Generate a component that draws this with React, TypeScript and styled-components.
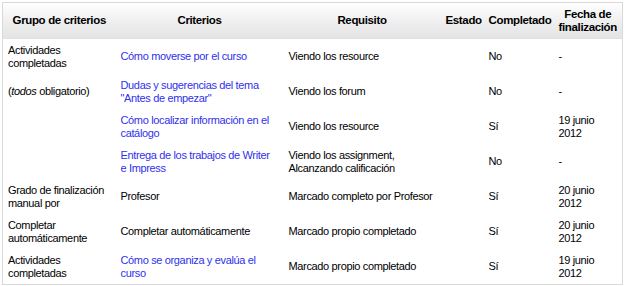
import React from "react";
import styled, { createGlobalStyle } from "styled-components";

const GlobalStyle = createGlobalStyle`
  html, body {
    margin: 0;
    padding: 0;
    background: #fff;
  }
  body {
    font-family: "Liberation Sans", Arial, sans-serif;
    font-size: 11px;
    letter-spacing: -0.35px;
    color: #000;
  }
`;

const Wrapper = styled.div`
  padding: 2px 3px 2px 2px;
`;

const StyledTable = styled.table`
  width: 620px;
  table-layout: fixed;
  border-collapse: collapse;
  border: 1px solid #d9d9d9;
`;

const HeaderRow = styled.tr`
  background: linear-gradient(to bottom, #ffffff 0%, #f0f0f0 50%, #e4e4e4 100%);
  border-bottom: 1px solid #e0e0e0;
`;

const HeaderCell = styled.th<{ $align?: string }>`
  height: 35px;
  padding: 0 5px;
  font-weight: bold;
  font-size: 11.5px;
  line-height: 13px;
  text-align: ${(p) => p.$align || "center"};
  vertical-align: middle;
`;

const Cell = styled.td`
  height: 35px;
  padding: 0 5px;
  line-height: 13px;
  vertical-align: middle;
  text-align: left;
`;

const Link = styled.a`
  color: #3030ee;
  text-decoration: none;
`;

type Row = {
  group?: React.ReactNode;
  criteria: string;
  link: boolean;
  requirement: React.ReactNode;
  done: string;
  date: React.ReactNode;
};

const rows: Row[] = [
  {
    group: "Actividades completadas",
    criteria: "Cómo moverse por el curso",
    link: true,
    requirement: "Viendo los resource",
    done: "No",
    date: "-",
  },
  {
    group: (
      <>
        (<i>todos</i> obligatorio)
      </>
    ),
    criteria: 'Dudas y sugerencias del tema "Antes de empezar"',
    link: true,
    requirement: "Viendo los forum",
    done: "No",
    date: "-",
  },
  {
    criteria: "Cómo localizar información en el catálogo",
    link: true,
    requirement: "Viendo los resource",
    done: "Sí",
    date: "19 junio 2012",
  },
  {
    criteria: "Entrega de los trabajos de Writer e\u00a0Impress",
    link: true,
    requirement: (
      <>
        Viendo los assignment,
        <br />
        Alcanzando calificación
      </>
    ),
    done: "No",
    date: "-",
  },
  {
    group: "Grado de finalización manual por",
    criteria: "Profesor",
    link: false,
    requirement: "Marcado completo por Profesor",
    done: "Sí",
    date: "20 junio 2012",
  },
  {
    group: "Completar automáticamente",
    criteria: "Completar automáticamente",
    link: false,
    requirement: "Marcado propio completado",
    done: "Sí",
    date: "20 junio 2012",
  },
  {
    group: "Actividades completadas",
    criteria: "Cómo se organiza y evalúa el curso",
    link: true,
    requirement: "Marcado propio completado",
    done: "Sí",
    date: "19 junio 2012",
  },
];

const App = () => {
  return (
    <>
      <GlobalStyle />
      <Wrapper>
        <StyledTable>
          <colgroup>
            <col style={{ width: 113 }} />
            <col style={{ width: 168 }} />
            <col style={{ width: 157 }} />
            <col style={{ width: 43 }} />
            <col style={{ width: 70 }} />
            <col style={{ width: 69 }} />
          </colgroup>
          <thead>
            <HeaderRow>
              <HeaderCell>Grupo de criterios</HeaderCell>
              <HeaderCell>Criterios</HeaderCell>
              <HeaderCell>Requisito</HeaderCell>
              <HeaderCell $align="left">Estado</HeaderCell>
              <HeaderCell>Completado</HeaderCell>
              <HeaderCell>
                Fecha de
                <br />
                finalización
              </HeaderCell>
            </HeaderRow>
          </thead>
          <tbody>
            {rows.map((r, i) => (
              <tr key={i}>
                <Cell>{r.group}</Cell>
                <Cell>{r.link ? <Link href="#">{r.criteria}</Link> : r.criteria}</Cell>
                <Cell>{r.requirement}</Cell>
                <Cell />
                <Cell>{r.done}</Cell>
                <Cell>{r.date}</Cell>
              </tr>
            ))}
          </tbody>
        </StyledTable>
      </Wrapper>
    </>
  );
};

export default App;
